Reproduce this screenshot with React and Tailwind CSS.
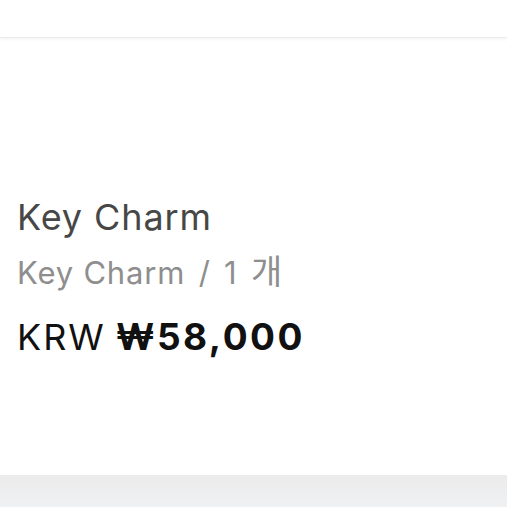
export default function App() {
  return (
    <div className="h-[507px] w-[507px] flex flex-col bg-white overflow-hidden" style={{ fontFamily: 'Inter, "Noto Sans CJK KR", sans-serif' }}>
      <div className="h-[38px] shrink-0 bg-white border-b border-[#ebebeb] shadow-[0_2px_3px_rgba(0,0,0,0.04)]" />
      <div className="flex-1 flex flex-col pl-[17px] pt-[152px]">
        <p className="text-[36px] leading-[55px] text-[#474747] tracking-[0.9px]">Key Charm</p>
        <p className="text-[31px] leading-[53px] text-[#8e8e8e] tracking-[0.8px]">
          Key Charm<span className="[word-spacing:4px]"> / 1 </span><span className="text-[34px]">개</span>
        </p>
        <p className="text-[36px] leading-[76px] text-[#111]">
          <span className="tracking-[2px]">KRW</span> <span className="font-bold text-[37px] tracking-[2.5px]">₩58,000</span>
        </p>
      </div>
      <div className="h-[32px] shrink-0 bg-gradient-to-b from-[#ebebeb] to-[#f0f1f3]" />
    </div>
  )
}
